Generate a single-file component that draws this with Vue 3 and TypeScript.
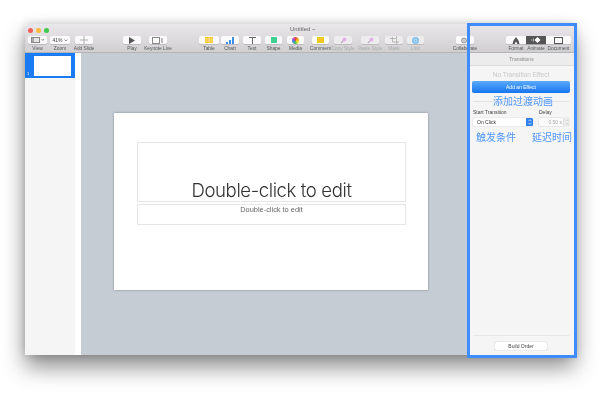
<script setup lang="ts">
interface Tool {
  id: string
  label: string
  width: number
  dim?: boolean
}

const leftTools: Tool[] = [
  { id: 'view', label: 'View', width: 19 },
  { id: 'zoom', label: 'Zoom', width: 20 },
  { id: 'add', label: 'Add Slide', width: 18 },
]
const playTools: Tool[] = [
  { id: 'play', label: 'Play', width: 18 },
  { id: 'live', label: 'Keynote Live', width: 18 },
]
const insertTools: Tool[] = [
  { id: 'table', label: 'Table', width: 20 },
  { id: 'chart', label: 'Chart', width: 18 },
  { id: 'text', label: 'Text', width: 18 },
  { id: 'shape', label: 'Shape', width: 17 },
  { id: 'media', label: 'Media', width: 17 },
]
const styleTools: Tool[] = [
  { id: 'comment', label: 'Comment', width: 17 },
  { id: 'copy', label: 'Copy Style', width: 18, dim: true },
  { id: 'paste', label: 'Paste Style', width: 18, dim: true },
  { id: 'mask', label: 'Mask', width: 18, dim: true },
  { id: 'link', label: 'Link', width: 17, dim: true },
]
const groups = [
  { name: 'left', tools: leftTools },
  { name: 'play', tools: playTools },
  { name: 'insert', tools: insertTools },
  { name: 'style', tools: styleTools },
]
const tabs = ['Format', 'Animate', 'Document']
</script>

<template>
  <div class="page">
    <div class="window">
      <header class="toolbar">
        <div class="titlebar">
          <span class="light red"></span>
          <span class="light yellow"></span>
          <span class="light green"></span>
          <span class="doc-title">Untitled ~</span>
        </div>
        <div class="tools">
          <div v-for="group in groups" :key="group.name" class="group" :class="group.name">
            <div
              v-for="tool in group.tools"
              :key="tool.id"
              class="tool"
              :class="{ dim: tool.dim }"
              :style="{ width: tool.width + 'px' }"
            >
              <div class="tool-btn">
                <svg v-if="tool.id === 'view'" width="14" height="6" viewBox="0 0 14 6">
                  <rect x="0.5" y="0.5" width="8" height="5" fill="#e4e4e4" stroke="#888" />
                  <rect x="1" y="1" width="2" height="4" fill="#aaa" />
                  <path d="M10.5 2l1.3 1.5L13 2" fill="none" stroke="#777" stroke-width="0.8" />
                </svg>
                <span v-else-if="tool.id === 'zoom'" class="zoom-val">
                  41%
                  <svg width="4" height="3" viewBox="0 0 4 3">
                    <path d="M0.5 0.5l1.5 1.5 1.5-1.5" fill="none" stroke="#777" stroke-width="0.8" />
                  </svg>
                </span>
                <svg v-else-if="tool.id === 'add'" width="8" height="8" viewBox="0 0 8 8">
                  <path d="M4 0v8M0 4h8" stroke="#b0b0b0" />
                </svg>
                <svg v-else-if="tool.id === 'play'" width="6" height="7" viewBox="0 0 6 7">
                  <path d="M0 0l6 3.5-6 3.5z" fill="#555" />
                </svg>
                <svg v-else-if="tool.id === 'live'" width="12" height="7" viewBox="0 0 12 7">
                  <rect x="0.5" y="0.5" width="7" height="6" fill="none" stroke="#888" />
                  <path d="M10 1v5" stroke="#bbb" stroke-width="2" />
                </svg>
                <svg v-else-if="tool.id === 'table'" width="8" height="6" viewBox="0 0 8 6">
                  <rect width="8" height="6" fill="#f5c62e" />
                  <path d="M0 2h8M0 4h8M4 0v6" stroke="#fbe9a8" stroke-width="0.6" />
                </svg>
                <svg v-else-if="tool.id === 'chart'" width="8" height="7" viewBox="0 0 8 7">
                  <path d="M0 5h2v2H0zM3 3h2v4H3zM6 0h2v7H6z" fill="#3b8fe8" />
                </svg>
                <svg v-else-if="tool.id === 'text'" width="7" height="7" viewBox="0 0 7 7">
                  <path d="M0 .5h7M3.5 .5V7" stroke="#666" />
                </svg>
                <span v-else-if="tool.id === 'shape'" class="shape-sq"></span>
                <span v-else-if="tool.id === 'media'" class="media-dot"></span>
                <span v-else-if="tool.id === 'comment'" class="comment-sq"></span>
                <svg v-else-if="tool.id === 'copy' || tool.id === 'paste'" width="7" height="7" viewBox="0 0 7 7">
                  <path d="M1 6l3-3" stroke="#b9a6c0" stroke-width="1.2" />
                  <circle cx="4.5" cy="2.5" r="2" fill="#e2b2e6" />
                </svg>
                <svg v-else-if="tool.id === 'mask'" width="9" height="8" viewBox="0 0 9 8">
                  <path d="M2.5 1v5H9M0 2.5h6.500V8M6.500 0v2" fill="none" stroke="#aaa" stroke-width="0.8" />
                </svg>
                <svg v-else width="7" height="7" viewBox="0 0 7 7">
                  <circle cx="3.5" cy="3.5" r="3.5" fill="#7dbdf0" />
                  <circle cx="3.5" cy="3.5" r="1.5" fill="none" stroke="#dceefb" stroke-width="0.8" />
                </svg>
              </div>
              <span class="tool-label">{{ tool.label }}</span>
            </div>
          </div>
          <div class="tool collab">
            <div class="tool-btn">
              <svg width="9" height="7" viewBox="0 0 9 7">
                <circle cx="3" cy="3.5" r="2.5" fill="#ccc" stroke="#888" stroke-width="0.8" />
                <path d="M6 1.5h3v4H6" fill="none" stroke="#aaa" />
              </svg>
            </div>
            <span class="tool-label">Collaborate</span>
          </div>
          <div class="tabs">
            <div v-for="tab in tabs" :key="tab" class="tab" :class="tab.toLowerCase()">
              <div class="tab-btn">
                <svg v-if="tab === 'Format'" width="8" height="7" viewBox="0 0 8 7">
                  <path d="M4 0l2.500 3.500L7.500 7h-2L4 4.500 2.500 7h-2l1-3.500z" fill="#555" />
                </svg>
                <svg v-else-if="tab === 'Animate'" width="10" height="6" viewBox="0 0 10 6">
                  <path d="M0 3h1.500M2.500 1.500v3" stroke="#ccc" stroke-width="0.8" />
                  <path d="M6.500 0l3 3-3 3-3-3z" fill="#fff" />
                </svg>
                <svg v-else width="9" height="7" viewBox="0 0 9 7">
                  <rect x="0.5" y="0.5" width="8" height="6" fill="none" stroke="#555" />
                </svg>
              </div>
              <span class="tool-label">{{ tab }}</span>
            </div>
          </div>
        </div>
      </header>

      <div class="body">
        <aside class="navigator">
          <div class="thumb-row">
            <span class="thumb-num">1</span>
            <div class="thumb"></div>
          </div>
        </aside>
        <div class="gutter"></div>

        <main class="canvas">
          <div class="slide">
            <div class="title-box">Double-click to edit</div>
            <div class="sub-box">Double-click to edit</div>
          </div>
        </main>

        <aside class="inspector">
          <div class="insp-head">Transitions</div>
          <div class="no-effect">No Transition Effect</div>
          <button class="add-effect">Add an Effect</button>
          <div class="insp-rule"></div>
          <div class="field-row">
            <div class="field-main">
              <label>Start Transition</label>
              <div class="select">
                <span>On Click</span>
                <b class="select-arrows">
                  <svg width="4" height="6" viewBox="0 0 4 6">
                    <path d="M0.5 2.2L2 0.7l1.5 1.5M0.5 3.8L2 5.3l1.5-1.5" fill="none" stroke="#fff" stroke-width="0.7" />
                  </svg>
                </b>
              </div>
            </div>
            <div class="field-side">
              <label>Delay</label>
              <div class="stepper">
                <span class="delay-input">0.50 s</span>
                <span class="arrows">
                  <svg width="4" height="6" viewBox="0 0 4 6">
                    <path d="M0.5 2.2L2 0.7l1.5 1.5M0.5 3.8L2 5.3l1.5-1.5" fill="none" stroke="#bbb" stroke-width="0.7" />
                  </svg>
                </span>
              </div>
            </div>
          </div>
          <div class="insp-footer">
            <button class="build-order">Build Order</button>
          </div>
        </aside>
      </div>

      <!-- annotation drawn over the screenshot -->
      <div class="highlight">
        <span class="note note-add">添加过渡动画</span>
        <span class="note note-start">触发条件</span>
        <span class="note note-delay">延迟时间</span>
      </div>
    </div>
  </div>
</template>

<style>
html,
body {
  margin: 0;
  background: #fff;
  overflow: hidden;
}
</style>

<style scoped>
.page {
  width: 600px;
  height: 406px;
  padding: 24px 0 0 25px;
  box-sizing: border-box;
  font-family: "Liberation Sans", Arial, sans-serif;
  /* own layer, keeps the tiny text on grayscale antialiasing */
  will-change: transform;
}
.window {
  position: relative;
  width: 550px;
  height: 331px;
  display: flex;
  flex-direction: column;
  box-shadow: 0 12px 22px rgba(0, 0, 0, 0.45), 0 0 10px rgba(0, 0, 0, 0.18);
  border-radius: 3px 3px 0 0;
}
.toolbar {
  height: 29px;
  flex: none;
  background: linear-gradient(#e9e7e9, #d1cfd2);
  border-bottom: 1px solid #b5b4b6;
  box-sizing: border-box;
  border-radius: 3px 3px 0 0;
}
.titlebar {
  position: relative;
  height: 11px;
  display: flex;
  align-items: center;
  gap: 3px;
  padding: 1px 0 0 3px;
}
.light {
  width: 5px;
  height: 5px;
  border-radius: 50%;
}
.red { background: #f25f58; }
.yellow { background: #f8bb3c; }
.green { background: #3ec94a; }
.doc-title {
  position: absolute;
  left: 265px;
  top: 1px;
  font-size: 6px;
  line-height: 9px;
  color: #666;
}
.tools {
  display: flex;
  padding-left: 3px;
}
.group {
  display: flex;
  flex: none;
}
.tool {
  display: flex;
  flex-direction: column;
  align-items: center;
  flex: none;
}
.tool-btn {
  width: 100%;
  height: 8px;
  background: #fafafa;
  border-radius: 1.5px;
  box-shadow: 0 0.5px 0.5px rgba(0, 0, 0, 0.25);
  display: flex;
  align-items: center;
  justify-content: center;
}
.tool-label {
  font-size: 4.8px;
  line-height: 8px;
  margin-top: 1px;
  color: #555;
  white-space: nowrap;
}
.dim .tool-label {
  color: #aaa;
}
.dim .tool-btn {
  background: #eeedee;
}
.left { gap: 3px; }
.left .tool:last-child { margin-left: 2px; }
.play { gap: 8px; margin-left: 30px; }
.insert { gap: 4px; margin-left: 32px; }
.insert .tool:nth-child(2) { margin-left: -2px; }
.insert .tool:last-child { margin-left: 1px; }
.style { gap: 5px; margin-left: 8px; }
.style .tool:nth-child(3) { margin-left: 4px; }
.style .tool:nth-child(4) { margin-left: 1px; }
.style .tool:last-child { margin-left: -1px; }
.zoom-val {
  display: flex;
  align-items: center;
  gap: 1px;
  font-size: 5px;
  color: #444;
}
.shape-sq {
  width: 6px;
  height: 6px;
  background: #3fcf8e;
}
.media-dot {
  width: 7px;
  height: 7px;
  border-radius: 50%;
  background: conic-gradient(#e8483f, #f5a623, #f5e11e, #4fc84f, #3a8fe8, #a64fd0, #e8483f);
}
.comment-sq {
  width: 7px;
  height: 6px;
  background: #f2c81e;
}
.collab {
  width: 18px;
  margin-left: 32px;
}
.tabs {
  display: flex;
  flex: none;
  margin-left: 32px;
}
.tab {
  display: flex;
  flex-direction: column;
  align-items: center;
  flex: none;
  width: 20px;
}
.tab.document {
  width: 25px;
}
.tab-btn {
  width: 100%;
  height: 8px;
  background: #fafafa;
  box-shadow: 0 0.5px 0.5px rgba(0, 0, 0, 0.25);
  display: flex;
  align-items: center;
  justify-content: center;
}
.tab.format .tab-btn { border-radius: 1.5px 0 0 1.5px; }
.tab.animate .tab-btn { background: #555; }
.tab.document .tab-btn { border-radius: 0 1.5px 1.5px 0; }

.body {
  flex: 1;
  display: flex;
  min-height: 0;
}
.navigator {
  width: 50px;
  flex: none;
  background: #f5f5f5;
}
.thumb-row {
  height: 25px;
  background: #1a7bf2;
  display: flex;
  align-items: flex-end;
  justify-content: space-between;
  padding: 3px 4px 2px 2px;
  box-sizing: border-box;
}
.thumb-num {
  font-size: 4px;
  line-height: 5px;
  color: #fff;
}
.thumb {
  width: 37px;
  height: 20px;
  background: #fff;
}
.gutter {
  width: 6px;
  flex: none;
  background: #fff;
}
.canvas {
  flex: 1;
  min-width: 0;
  background: #c5ccd4;
  padding: 60px 0 0 33px;
}
.slide {
  width: 314px;
  height: 177px;
  background: #fff;
  box-shadow: 0 0 2px rgba(60, 70, 85, 0.55);
  padding: 29px 22px 0 23px;
  box-sizing: border-box;
}
.title-box {
  height: 60px;
  border: 1px solid #e6e6e6;
  box-sizing: border-box;
  display: flex;
  align-items: flex-end;
  justify-content: center;
  font-family: Inter, "Liberation Sans", sans-serif;
  font-weight: 300;
  font-size: 18.6px;
  letter-spacing: -0.4px;
  line-height: 21px;
  color: #333;
}
.sub-box {
  height: 21px;
  margin-top: 2px;
  border: 1px solid #e6e6e6;
  box-sizing: border-box;
  text-align: center;
  font-size: 7.4px;
  line-height: 9px;
  color: #666;
}
.inspector {
  width: 107px;
  flex: none;
  background: #f5f5f5;
  display: flex;
  flex-direction: column;
  padding: 0 6px 5px 5px;
  box-sizing: border-box;
}
.insp-head {
  margin: 0 -6px 0 -5px;
  height: 12px;
  background: #ececec;
  border-bottom: 1px solid #dcdcdc;
  font-size: 5px;
  line-height: 12px;
  text-align: center;
  color: #888;
}
.no-effect {
  margin-top: 4px;
  font-size: 6.5px;
  line-height: 9px;
  text-align: center;
  color: #c8c8c8;
}
.add-effect {
  margin: 2px -1px 0;
  height: 12px;
  padding: 0;
  border: 0;
  border-radius: 2px;
  background: linear-gradient(#5aaafa, #1676f0);
  color: #fff;
  font: 5px "Liberation Sans", Arial, sans-serif;
}
.insp-rule {
  margin-top: 8px;
  border-top: 1px solid #e2e2e2;
}
.field-row {
  display: flex;
  margin-top: 7px;
  gap: 6px;
}
.field-main {
  width: 61px;
}
.field-side {
  flex: 1;
}
label {
  display: block;
  font-size: 5px;
  line-height: 7px;
  color: #444;
}
.select {
  margin-top: 2px;
  height: 8px;
  background: #fff;
  border-radius: 1.5px;
  box-shadow: 0 0 1px rgba(0, 0, 0, 0.4);
  display: flex;
  justify-content: space-between;
  padding-left: 4px;
  font-size: 5px;
  line-height: 8px;
  color: #333;
}
.select-arrows {
  width: 7px;
  background: #2f80ed;
  border-radius: 0 1.5px 1.5px 0;
  display: flex;
  align-items: center;
  justify-content: center;
}
.stepper {
  margin-top: 2px;
  display: flex;
  gap: 1px;
}
.delay-input {
  width: 24px;
  height: 8px;
  background: #fafafa;
  box-shadow: 0 0 1px rgba(0, 0, 0, 0.3);
  font-size: 5px;
  line-height: 8px;
  text-align: right;
  color: #aaa;
  padding-right: 1px;
  box-sizing: border-box;
}
.arrows {
  width: 5px;
  height: 8px;
  background: #f0f0f0;
  border-radius: 2px;
  box-shadow: 0 0 1px rgba(0, 0, 0, 0.3);
  display: flex;
  align-items: center;
  justify-content: center;
}
.insp-footer {
  margin-top: auto;
  border-top: 1px solid #e6e6e6;
  padding-top: 6px;
  display: flex;
  justify-content: center;
}
.build-order {
  width: 52px;
  height: 8px;
  padding: 0;
  border: 0;
  border-radius: 1.5px;
  background: #fff;
  box-shadow: 0 0 1px rgba(0, 0, 0, 0.45);
  font: 5px "Liberation Sans", Arial, sans-serif;
  color: #444;
}
.highlight {
  position: absolute;
  left: 442px;
  top: -1px;
  width: 110px;
  height: 335px;
  border: 3px solid #3f8cff;
  box-sizing: border-box;
  pointer-events: none;
}
.note {
  position: absolute;
  font-family: "Liberation Sans", "Noto Sans CJK SC", sans-serif;
  font-size: 10px;
  line-height: 12px;
  color: #4f97fb;
  white-space: nowrap;
}
.note-add { left: 23px; top: 70px; }
.note-start { left: 6px; top: 106px; }
.note-delay { left: 62px; top: 106px; }
</style>
